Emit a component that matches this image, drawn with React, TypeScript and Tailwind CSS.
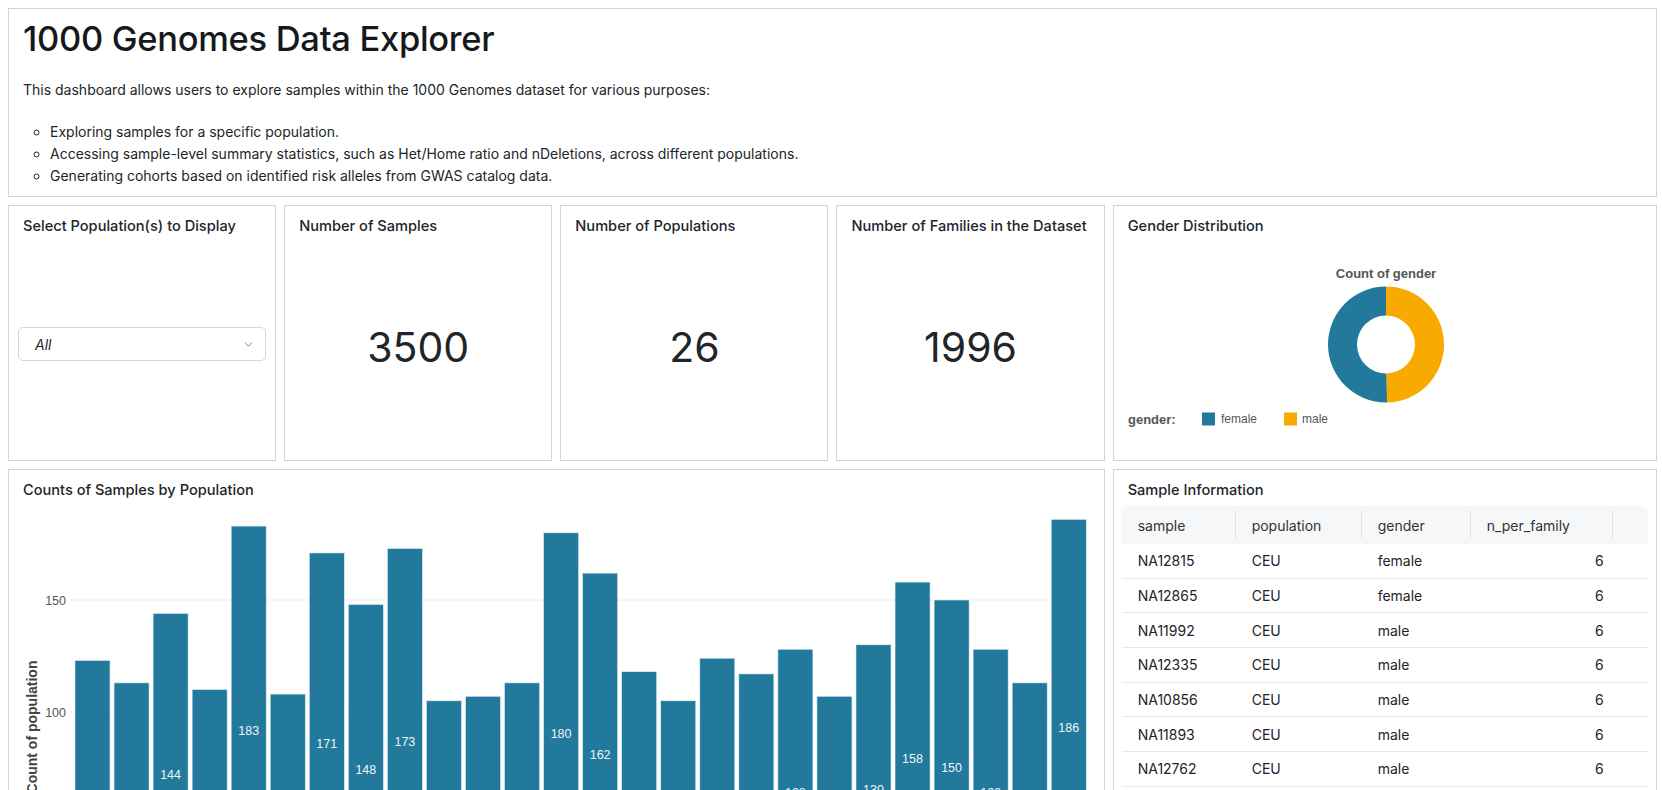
import React from 'react'
import { ChevronDown } from 'lucide-react'

const chartFont = "'Liberation Sans', Arial, sans-serif"
const teal = '#22799c'
const orange = '#f8aa00'

const bars = [123, 113, 144, 110, 183, 108, 171, 148, 173, 105, 107, 113, 180, 162, 118, 105, 124, 117, 128, 107, 130, 158, 150, 128, 113, 186]

const rows = [
  ['NA12815', 'CEU', 'female', 6],
  ['NA12865', 'CEU', 'female', 6],
  ['NA11992', 'CEU', 'male', 6],
  ['NA12335', 'CEU', 'male', 6],
  ['NA10856', 'CEU', 'male', 6],
  ['NA11893', 'CEU', 'male', 6],
  ['NA12762', 'CEU', 'male', 6],
  ['NA12763', 'CEU', 'female', 6],
]

const Card: React.FC<{ title: string; className?: string; children?: React.ReactNode }> = ({ title, className, children }) => {
  return (
    <div className={'flex flex-col border border-[#cfd4da] bg-white ' + (className || '')}>
      <h3 className="px-[14px] pt-[10px] text-[14.6px] leading-[20px] font-medium text-[#212529]">{title}</h3>
      {children}
    </div>
  )
}

const StatCard: React.FC<{ title: string; value: string }> = ({ title, value }) => {
  return (
    <Card title={title}>
      <div className="flex flex-1 items-center justify-center text-[41px] font-normal text-[#212529]">{value}</div>
    </Card>
  )
}

// angles in degrees, clockwise from 12 o'clock
const arc = (cx: number, cy: number, r: number, r0: number, a0: number, a1: number) => {
  const p = (a: number, rr: number) => {
    const t = (a * Math.PI) / 180
    return `${cx + rr * Math.sin(t)} ${cy - rr * Math.cos(t)}`
  }
  const large = a1 - a0 > 180 ? 1 : 0
  return `M ${p(a0, r)} A ${r} ${r} 0 ${large} 1 ${p(a1, r)} L ${p(a1, r0)} A ${r0} ${r0} 0 ${large} 0 ${p(a0, r0)} Z`
}

const GenderChart = () => {
  const f = 0.503
  const split = 360 - 360 * f
  return (
    <svg width="514" height="200" className="mx-[14px] mt-[4px] block" fontFamily={chartFont}>
      <text x="258" y="38" textAnchor="middle" fontSize="13" fontWeight="bold" fill="#555">Count of gender</text>
      <path d={arc(258, 104.5, 58, 29, split, 360)} fill={teal} />
      <path d={arc(258, 104.5, 58, 29, 0, split)} fill={orange} />
      <text x="0" y="183.5" fontSize="13" fontWeight="bold" fill="#555">gender:</text>
      <rect x="74" y="172.5" width="13" height="13" fill={teal} />
      <text x="93" y="183" fontSize="12" fill="#555">female</text>
      <rect x="156" y="172.5" width="13" height="13" fill={orange} />
      <text x="174" y="183" fontSize="12" fill="#555">male</text>
    </svg>
  )
}

const BarChart = () => {
  const k = 2.24
  const y = (v: number) => 95 + (150 - v) * k
  const pitch = 39.05
  return (
    <svg width="1067" height="470" className="mx-[14px] mt-[5px] block" fontFamily={chartFont}>
      {[100, 150].map((v) => (
        <g key={v}>
          <line x1="47" x2="1069" y1={y(v)} y2={y(v)} stroke="#ececec" strokeWidth="1" />
          <text x="43" y={y(v) + 4.5} textAnchor="end" fontSize="12.5" fill="#555">{v}</text>
        </g>
      ))}
      {bars.map((v, i) => {
        const x = 50 + pitch * i + 2
        return (
          <g key={i}>
            <rect x={x} y={y(v)} width="35" height={y(0) - y(v)} fill={teal} stroke="#d8eef5" strokeWidth="0.6" />
            <text x={x + 17.5} y={(y(v) + y(0)) / 2 + 4} textAnchor="middle" fontSize="12.5" fill="#eef6f9">{v}</text>
          </g>
        )
      })}
      <text transform="translate(9,222) rotate(-90)" textAnchor="middle" dominantBaseline="central" fontSize="14" fontWeight="bold" fill="#444">Count of population</text>
    </svg>
  )
}

const cols = [
  { name: 'sample', w: 'w-[114px]' },
  { name: 'population', w: 'w-[126px]' },
  { name: 'gender', w: 'w-[109px]' },
  { name: 'n_per_family', w: 'w-[142px]' },
]

const SampleTable = () => {
  return (
    <div className="mx-[8px] mt-[6px] text-[14px] text-[#1f2327]">
      <div className="flex h-[38px] items-center rounded-t-[6px] bg-[#f6f7f8] text-[#333]">
        {cols.map((c) => (
          <div key={c.name} className={'relative flex h-full items-center pl-[16px] ' + c.w}>
            {c.name}
            <span className="absolute right-0 top-[5px] h-[27px] w-px bg-[#dde2e8]" />
          </div>
        ))}
        <div className="flex-1" />
      </div>
      {rows.map((r) => (
        <div key={r[0] as string} className="flex h-[34.7px] items-center border-b border-[#e6e8eb]">
          <div className="w-[114px] pl-[16px]">{r[0]}</div>
          <div className="w-[126px] pl-[16px]">{r[1]}</div>
          <div className="w-[109px] pl-[16px]">{r[2]}</div>
          <div className="w-[142px] pr-[9px] text-right">{r[3]}</div>
          <div className="flex-1" />
        </div>
      ))}
    </div>
  )
}

export default function App() {
  return (
    <div className="flex flex-col gap-2 bg-white pt-2 pb-2 pl-2 pr-[5px] font-[Inter,sans-serif] text-[#212529]">
      <div className="h-[189px] border border-[#cfd4da] px-[14px] pt-[8px]">
        <h1 className="text-[34.5px] leading-[43px] font-medium tracking-[-0.3px] text-[#16191c]">1000 Genomes Data Explorer</h1>
        <p className="mt-[19px] text-[14px] leading-[21px]">
          This dashboard allows users to explore samples within the 1000 Genomes dataset for various purposes:
        </p>
        <ul className="mt-[21px] list-[circle] pl-[27px] text-[14px] leading-[22px]">
          <li>Exploring samples for a specific population.</li>
          <li>Accessing sample-level summary statistics, such as Het/Home ratio and nDeletions, across different populations.</li>
          <li>Generating cohorts based on identified risk alleles from GWAS catalog data.</li>
        </ul>
      </div>

      <div className="grid h-[256px] grid-cols-6 gap-2">
        <Card title="Select Population(s) to Display">
          <div className="flex flex-1 items-center px-[9px] pb-[8px]">
            <div className="flex h-[34px] w-full items-center justify-between rounded-[5px] border border-[#d3d7dc] pl-[16px] pr-[10px] text-[14px] italic text-[#212529]">
              <span>All</span>
              <ChevronDown size={13} strokeWidth={1.6} className="text-[#666]" />
            </div>
          </div>
        </Card>
        <StatCard title="Number of Samples" value="3500" />
        <StatCard title="Number of Populations" value="26" />
        <StatCard title="Number of Families in the Dataset" value="1996" />
        <Card title="Gender Distribution" className="col-span-2">
          <GenderChart />
        </Card>
      </div>

      <div className="grid h-[520px] grid-cols-6 gap-2">
        <Card title="Counts of Samples by Population" className="col-span-4 overflow-hidden">
          <BarChart />
        </Card>
        <Card title="Sample Information" className="col-span-2 overflow-hidden">
          <SampleTable />
        </Card>
      </div>
    </div>
  )
}
